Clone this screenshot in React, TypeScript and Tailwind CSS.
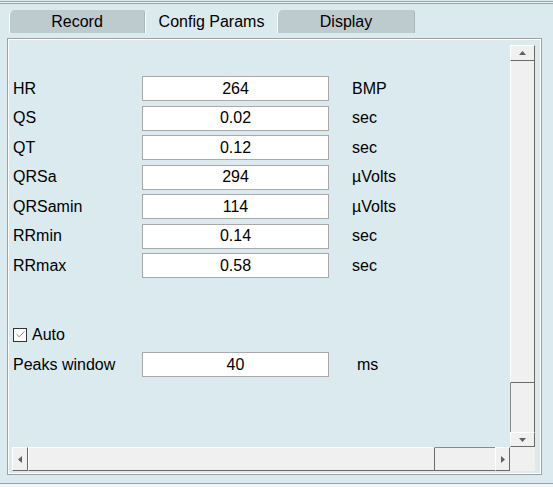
import { Check } from 'lucide-react';

type Row = { label: string; value: string; unit: string };

const rows: Row[] = [
  { label: 'HR', value: '264', unit: 'BMP' },
  { label: 'QS', value: '0.02', unit: 'sec' },
  { label: 'QT', value: '0.12', unit: 'sec' },
  { label: 'QRSa', value: '294', unit: 'µVolts' },
  { label: 'QRSamin', value: '114', unit: 'µVolts' },
  { label: 'RRmin', value: '0.14', unit: 'sec' },
  { label: 'RRmax', value: '0.58', unit: 'sec' },
];

function Field({ value }: { value: string }) {
  return (
    <div className="h-[25px] w-[187px] border border-[#a9a9a9] bg-white flex items-center justify-center text-[16px] text-black">
      {value}
    </div>
  );
}

function Tab({ label, width, active }: { label: string; width: number; active?: boolean }) {
  return (
    <div
      className={
        active
          ? 'h-[23px] flex items-center justify-center rounded-tl-[5px] rounded-tr-[3px] border-l border-white text-[16px] text-black'
          : 'h-[23px] flex items-center justify-center rounded-tl-[5px] rounded-tr-[3px] border-l border-white border-r border-r-[#a9b7bb] bg-[#bdcbcf] text-[16px] text-black'
      }
      style={{ width }}
    >
      {label}
    </div>
  );
}

export default function App() {
  return (
    <div className="w-[553px] h-[487px] overflow-hidden bg-[#dbeaef] font-['Liberation_Sans',Arial,sans-serif] flex flex-col">
      {/* window top edge */}
      <div className="h-px" />
      <div className="h-px bg-[#a0a0a0]" />
      <div className="h-px bg-[#eef5f7]" />
      <div className="h-px bg-[#a0a0a0]" />

      {/* tabs */}
      <div className="flex pl-[9px] pt-[6px] h-[29px]">
        <Tab label="Record" width={136} />
        <Tab label="Config Params" width={132} active />
        <Tab label="Display" width={138} />
      </div>

      {/* panel */}
      <div className="mt-[5px] ml-[7px] w-[535px] h-[437px] border border-[#a0a0a0]">
        <div className="h-full border border-white pl-[3px] pt-[5px] pr-[5px] pb-[2px]">
          <div className="w-[523px] h-[426px] flex flex-col">
            <div className="flex h-[402px]">
              {/* content */}
              <div className="w-[498px] pl-px pt-[31px] text-[16px] text-black">
                <div className="grid grid-cols-[129px_187px_1fr] gap-y-[4.5px] items-center">
                  {rows.map((r) => (
                    <div key={r.label} className="contents">
                      <span className="leading-none">{r.label}</span>
                      <Field value={r.value} />
                      <span className="pl-[23px] leading-none">{r.unit}</span>
                    </div>
                  ))}
                </div>

                <div className="mt-[50px] flex items-center h-[13px]">
                  <div className="w-[14px] h-[14px] border border-[#333] bg-white flex items-center justify-center">
                    <Check size={11} strokeWidth={1.5} className="text-[#555]" />
                  </div>
                  <span className="ml-[5px] leading-none">Auto</span>
                </div>

                <div className="mt-[11px] grid grid-cols-[129px_187px_1fr] items-center">
                  <span className="leading-none">Peaks window</span>
                  <Field value="40" />
                  <span className="pl-[28px] leading-none">ms</span>
                </div>
              </div>

              {/* vertical scrollbar */}
              <div className="w-[25px] flex flex-col">
                <div className="h-[16px] bg-[#f0f0f0] border-t border-l border-white border-r border-r-[#696969] border-b border-b-[#696969] flex items-center justify-center">
                  <svg width="7" height="4" viewBox="0 0 7 4"><path d="M3.5 0 L7 4 L0 4 Z" fill="#606060" /></svg>
                </div>
                <div className="h-[322px] bg-[#f0f0f0] border-l border-white border-r border-r-[#696969] border-b border-b-[#696969]" />
                <div className="h-[49px] bg-[#f0f0f0] border-l border-[#8a8a8a] border-r border-r-[#696969]" />
                <div className="h-[15px] bg-[#f0f0f0] border-t border-l border-white border-r border-r-[#696969] border-b border-b-[#696969] flex items-center justify-center">
                  <svg width="7" height="4" viewBox="0 0 7 4"><path d="M0 0 L7 0 L3.5 4 Z" fill="#606060" /></svg>
                </div>
              </div>
            </div>

            {/* horizontal scrollbar + corner */}
            <div className="flex h-[24px]">
              <div className="w-[498px] flex">
                <div className="w-[16px] bg-[#f0f0f0] border-t border-l border-white border-r border-r-[#696969] border-b border-b-[#696969] flex items-center justify-center">
                  <svg width="4" height="7" viewBox="0 0 4 7"><path d="M0 3.5 L4 0 L4 7 Z" fill="#606060" /></svg>
                </div>
                <div className="w-[407px] bg-[#f0f0f0] border-t border-l border-white border-r border-r-[#696969] border-b border-b-[#696969]" />
                <div className="w-[60px] bg-[#f0f0f0] border-t border-[#8a8a8a] border-b border-b-[#696969]" />
                <div className="w-[15px] bg-[#f0f0f0] border-t border-l border-white border-r border-r-[#696969] border-b border-b-[#696969] flex items-center justify-center">
                  <svg width="4" height="7" viewBox="0 0 4 7"><path d="M0 0 L4 3.5 L0 7 Z" fill="#606060" /></svg>
                </div>
              </div>
              <div className="w-[25px] bg-[#f0f0f0]" />
            </div>
          </div>
        </div>
      </div>

      {/* window bottom edge */}
      <div className="mt-[8px] h-px bg-[#a0a0a0]" />
      <div className="flex-1 bg-[#f5f5f5]" />
    </div>
  );
}
